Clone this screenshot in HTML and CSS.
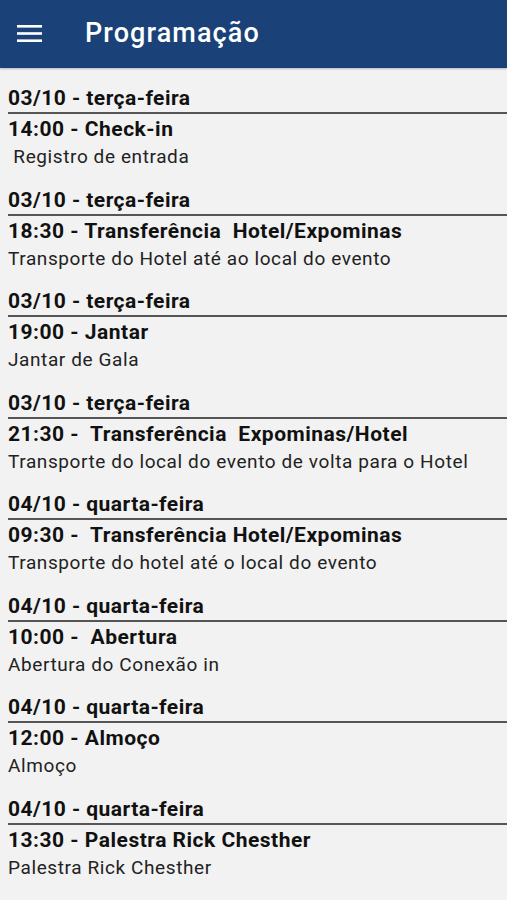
FILE: index.html
```html
<!DOCTYPE html>
<html lang="pt">
  <head>
    <meta charset="UTF-8" />
    <meta name="viewport" content="width=device-width, initial-scale=1.0" />
    <title>Programação</title>
    <link rel="stylesheet" href="styles.css">
  </head>
  <body>
    <header class="toolbar">
      <svg class="menu-icon" width="25" height="18" viewBox="0 0 25 18">
        <rect x="0" y="0" width="25" height="2.6" fill="#fff" />
        <rect x="0" y="7.2" width="25" height="2.6" fill="#fff" />
        <rect x="0" y="14.4" width="25" height="2.6" fill="#fff" />
      </svg>
      <h1>Programação</h1>
    </header>

    <main class="schedule">
      <div class="event">
        <div class="date">03/10 - terça-feira</div>
        <div class="title">14:00 - Check-in</div>
        <div class="desc"> Registro de entrada</div>
      </div>
      <div class="event">
        <div class="date">03/10 - terça-feira</div>
        <div class="title">18:30 - Transferência  Hotel/Expominas</div>
        <div class="desc">Transporte do Hotel até ao local do evento</div>
      </div>
      <div class="event">
        <div class="date">03/10 - terça-feira</div>
        <div class="title">19:00 - Jantar</div>
        <div class="desc">Jantar de Gala</div>
      </div>
      <div class="event">
        <div class="date">03/10 - terça-feira</div>
        <div class="title">21:30 -  Transferência  Expominas/Hotel</div>
        <div class="desc">Transporte do local do evento de volta para o Hotel</div>
      </div>
      <div class="event">
        <div class="date">04/10 - quarta-feira</div>
        <div class="title">09:30 -  Transferência Hotel/Expominas</div>
        <div class="desc">Transporte do hotel até o local do evento</div>
      </div>
      <div class="event">
        <div class="date">04/10 - quarta-feira</div>
        <div class="title">10:00 -  Abertura</div>
        <div class="desc">Abertura do Conexão in</div>
      </div>
      <div class="event">
        <div class="date">04/10 - quarta-feira</div>
        <div class="title">12:00 - Almoço</div>
        <div class="desc">Almoço</div>
      </div>
      <div class="event">
        <div class="date">04/10 - quarta-feira</div>
        <div class="title">13:30 - Palestra Rick Chesther</div>
        <div class="desc">Palestra Rick Chesther</div>
      </div>
    </main>
  </body>
</html>
```

FILE: styles.css
```css
body {
  margin: 0;
  background-color: #f2f2f2;
  font-family: Roboto, "Noto Sans", sans-serif;
  color: #111;
}
.toolbar {
  height: 68px;
  background-color: #1a4279;
  display: flex;
  align-items: center;
  padding-left: 17px;
  box-shadow: 0 1px 2px rgba(0, 0, 0, 0.25);
}
.menu-icon {
  flex: none;
}
.toolbar h1 {
  margin: 0 0 2px 43px;
  font-size: 27px;
  font-weight: 500;
  letter-spacing: 1.1px;
  color: #fff;
}
.schedule {
  padding: 18px 0 0 8px;
}
.event {
  margin-bottom: 16px;
}
.date {
  font-size: 21px;
  font-weight: bold;
  letter-spacing: 0.45px;
  line-height: 24px;
  padding-bottom: 2px;
  border-bottom: 2px solid #555;
}
.title {
  font-size: 21px;
  font-weight: bold;
  letter-spacing: 0.5px;
  line-height: 24px;
  margin-top: 3px;
  white-space: pre-wrap;
}
.desc {
  font-size: 19px;
  letter-spacing: 0.6px;
  line-height: 28.5px;
  margin-top: 2px;
  color: #222;
  white-space: pre-wrap;
}
```
